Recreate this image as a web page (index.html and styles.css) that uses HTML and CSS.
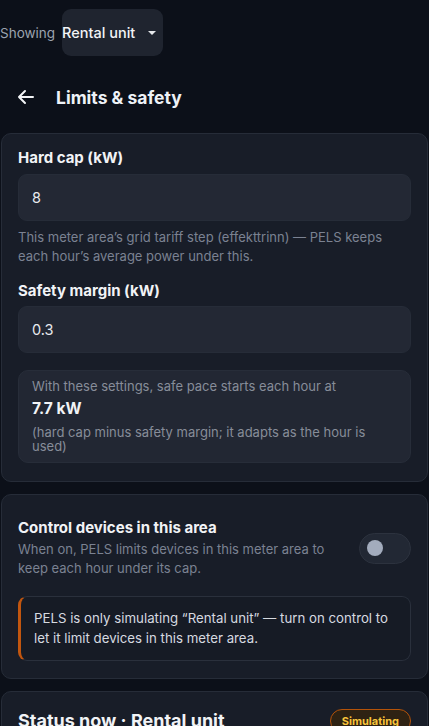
FILE: index.html
```html
<!DOCTYPE html>
<html lang="en">
<head>
<meta charset="utf-8">
<title>Limits &amp; safety</title>
<link rel="stylesheet" href="styles.css">
</head>
<body>
<div class="page">
  <div class="toolbar">
    <span class="showing">Showing</span>
    <div class="select">
      <span>Rental unit</span>
      <svg class="caret" width="10" height="6" viewBox="0 0 10 6"><path d="M1 1h8L5 5z" fill="#e5e7eb"/></svg>
    </div>
  </div>

  <div class="header">
    <svg class="back" width="20" height="20" viewBox="0 0 20 20" fill="none" stroke="#f3f4f6" stroke-width="2" stroke-linecap="round" stroke-linejoin="round"><path d="M17 10H3M9 4l-6 6 6 6"/></svg>
    <h1 class="title">Limits &amp; safety</h1>
  </div>

  <section class="card">
    <div class="field-label">Hard cap (kW)</div>
    <div class="input">8</div>
    <p class="help">This meter area’s grid tariff step (effekttrinn) — PELS keeps each hour’s average power under this.</p>

    <div class="field-label second">Safety margin (kW)</div>
    <div class="input">0.3</div>

    <div class="info">
      <div class="info-line">With these settings, safe pace starts each hour at</div>
      <div class="info-value">7.7 kW</div>
      <div class="info-note">(hard cap minus safety margin; it adapts as the hour is used)</div>
    </div>
  </section>

  <section class="card control">
    <div class="toggle-row">
      <div class="toggle-text">
        <div class="toggle-title">Control devices in this area</div>
        <div class="toggle-desc">When on, PELS limits devices in this meter area to keep each hour under its cap.</div>
      </div>
      <div class="toggle"><span class="knob"></span></div>
    </div>
    <div class="alert">PELS is only simulating “Rental unit” — turn on control to let it limit devices in this meter area.</div>
  </section>

  <section class="card status">
    <div class="status-row">
      <h2 class="status-title">Status now · Rental unit</h2>
      <span class="badge">Simulating</span>
    </div>
  </section>
</div>
</body>
</html>
```

FILE: styles.css
```css
* { box-sizing: border-box; }

html, body {
  margin: 0;
  padding: 0;
  background: #0c1019;
  color: #e5e7eb;
  font-family: Inter, "Noto Sans", sans-serif;
}

.page {
  padding: 9px 1px 0;
  overflow: hidden;
  height: 726px;
}

.toolbar {
  display: flex;
  align-items: center;
  gap: 7px;
}

.showing {
  font-size: 13.5px;
  color: #9ca3af;
  margin-left: -1px;
}

.select {
  display: flex;
  align-items: center;
  justify-content: space-between;
  height: 47px;
  width: 101px;
  padding: 0 6px 0 0;
  background: #1f242f;
  border-radius: 9px;
  font-size: 14.5px;
  font-weight: 500;
  color: #f3f4f6;
  white-space: nowrap;
}

.header {
  display: flex;
  align-items: center;
  gap: 20px;
  height: 38px;
  margin: 22px 0 17px 15px;
}

.back { display: block; }

.title {
  margin: 0;
  font-size: 17.5px;
  font-weight: 700;
  color: #eef2f7;
}

.card {
  background: #181d28;
  border: 1px solid #262c38;
  border-radius: 10px;
  padding: 14px 16px 18px;
  margin-bottom: 12px;
}

.field-label {
  font-size: 15px;
  font-weight: 700;
  line-height: 20px;
  color: #f1f3f6;
}

.field-label.second { margin-top: 15px; }

.input {
  margin-top: 6px;
  height: 47px;
  display: flex;
  align-items: center;
  padding: 0 13px;
  background: #232834;
  border: 1px solid #262c38;
  border-radius: 9px;
  font-size: 14.5px;
  color: #e8eaee;
}

.field-label.second + .input { margin-top: 5px; }

.help {
  margin: 7px 0 0;
  font-size: 13px;
  line-height: 19px;
  color: #7b8292;
}

.info {
  margin-top: 17px;
  background: #222733;
  border: 1px solid #272d39;
  border-radius: 10px;
  padding: 7px 13px 9px;
  color: #878d99;
}

.info-line {
  font-size: 13px;
  line-height: 17px;
}

.info-value {
  margin-top: 3px;
  font-size: 15.5px;
  font-weight: 700;
  line-height: 22px;
  color: #f1f3f6;
}

.info-note {
  margin-top: 5px;
  font-size: 13px;
  line-height: 14px;
}

.control { padding-top: 23px; padding-bottom: 17px; }

.toggle-row {
  display: flex;
  align-items: center;
  justify-content: space-between;
  gap: 24px;
}

.toggle-title {
  font-size: 15px;
  font-weight: 700;
  line-height: 20px;
  color: #f1f3f6;
}

.toggle-desc {
  margin-top: 2px;
  font-size: 13px;
  line-height: 19px;
  color: #7b8292;
}

.toggle {
  flex: 0 0 auto;
  width: 52px;
  height: 31px;
  border-radius: 16px;
  background: #222834;
  border: 1px solid #2c323e;
  display: flex;
  align-items: center;
  padding-left: 7px;
}

.knob {
  width: 16px;
  height: 16px;
  border-radius: 50%;
  background: #a3acbd;
}

.alert {
  margin-top: 18px;
  border: 1px solid #2a303c;
  border-left: 3px solid #c2560f;
  border-radius: 9px;
  background: #161b25;
  padding: 11px 14px 12px 13px;
  font-size: 13.25px;
  line-height: 20px;
  color: #d6dae0;
}

.status { padding-top: 16px; }

.status-row {
  display: flex;
  align-items: center;
  justify-content: space-between;
}

.status-title {
  margin: 0;
  font-size: 18px;
  font-weight: 700;
  color: #f1f3f6;
  line-height: 26px;
}

.badge {
  border: 1px solid #b45309;
  background: #2e2213;
  color: #f8c43a;
  border-radius: 12px;
  padding: 3px 11px;
  font-size: 11px;
  font-weight: 700;
  line-height: 16px;
}
```
